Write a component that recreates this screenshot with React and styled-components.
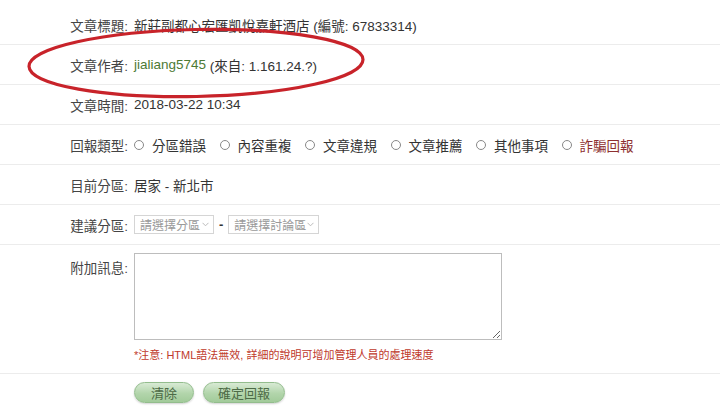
import React from "react";
import styled, { createGlobalStyle } from "styled-components";

const Global = createGlobalStyle`
  html, body { margin: 0; padding: 0; background: #fff; }
  body { font-family: "Liberation Sans", Arial, "Noto Sans CJK TC", sans-serif; color: #333; }
`;

const Page = styled.div`
  position: relative;
  width: 720px;
  height: 413px;
  padding-top: 5px;
  box-sizing: border-box;
  overflow: hidden;
`;

const Row = styled.div`
  display: flex;
  align-items: ${(p) => (p.$top ? "flex-start" : "center")};
  min-height: ${(p) => p.$h || 39}px;
  border-bottom: ${(p) => (p.$last ? "none" : "1px solid #ececec")};
  font-size: 13.5px;
  box-sizing: content-box;
`;

const Label = styled.div`
  width: 128px;
  text-align: right;
  color: #444;
  padding-top: ${(p) => p.$pt || 0}px;
  flex: none;
`;

const Value = styled.div`
  margin-left: 6px;
  color: #333;
  display: flex;
  padding-top: ${(p) => p.$pt || 0}px;
  flex-direction: ${(p) => (p.$col ? "column" : "row")};
  align-items: ${(p) => (p.$col ? "flex-start" : "center")};
`;

const Author = styled.span`
  color: #4c7a34;
`;

const Options = styled.div`
  display: flex;
  gap: 13.5px;
  margin-left: 0;
`;

const Option = styled.label`
  display: flex;
  align-items: center;
  gap: 8px;
  color: ${(p) => (p.$alert ? "#8e3030" : "#333")};
`;

const Radio = styled.span`
  width: 8px;
  height: 8px;
  border: 1px solid #888;
  border-radius: 50%;
  box-sizing: content-box;
`;

const Select = styled.div`
  display: flex;
  align-items: center;
  justify-content: space-between;
  width: ${(p) => p.$w}px;
  height: 19px;
  box-sizing: border-box;
  border: 1px solid #d5d5d5;
  padding: 0 4px 0 5px;
  font-size: 12px;
  color: #9a9a9a;
`;

const Dash = styled.span`
  margin: 0 5px;
  font-size: 13px;
  color: #333;
  font-weight: bold;
`;

const TextArea = styled.textarea`
  width: 368px;
  height: 87px;
  box-sizing: border-box;
  border: 1px solid #bdbdbd;
  margin: 0;
  resize: both;
  font-family: inherit;
`;

const Note = styled.div`
  font-size: 11px;
  color: #c0392b;
  margin-top: 6px;
`;

const Buttons = styled.div`
  display: flex;
  gap: 9px;
  margin-left: 134px;
  padding-top: 8px;
`;

const Button = styled.button`
  width: ${(p) => p.$w}px;
  height: 21px;
  border-radius: 11px;
  border: 1px solid #93bd8d;
  background: linear-gradient(#d8ead4, #b2d5ab 55%, #a2cb9a);
  box-shadow: 0 1px 2px rgba(0, 0, 0, 0.18);
  color: #4d6a46;
  font-size: 13px;
  font-family: "Liberation Sans", "Noto Sans CJK TC", sans-serif;
  padding: 0;
`;

const Mark = styled.svg`
  position: absolute;
  left: 0;
  top: 0;
  pointer-events: none;
`;

const Chevron = () => (
  <svg width="7" height="5" viewBox="0 0 7 5">
    <path d="M0.5 0.8 L3.5 3.8 L6.5 0.8" fill="none" stroke="#bbb" strokeWidth="1" />
  </svg>
);

const types = ["分區錯誤", "內容重複", "文章違規", "文章推薦", "其他事項"];

export default function App() {
  return (
    <Page>
      <Global />
      <Row>
        <Label>文章標題:</Label>
        <Value>新莊副都心宏匯凱悅嘉軒酒店 (編號: 67833314)</Value>
      </Row>
      <Row>
        <Label>文章作者:</Label>
        <Value>
          <Author>jialiang5745</Author>&nbsp;(來自: 1.161.24.?)
        </Value>
      </Row>
      <Row>
        <Label>文章時間:</Label>
        <Value>2018-03-22 10:34</Value>
      </Row>
      <Row>
        <Label>回報類型:</Label>
        <Value>
          <Options>
            {types.map((t) => (
              <Option key={t}>
                <Radio />
                {t}
              </Option>
            ))}
            <Option $alert>
              <Radio />
              詐騙回報
            </Option>
          </Options>
        </Value>
      </Row>
      <Row>
        <Label>目前分區:</Label>
        <Value>居家 - 新北市</Value>
      </Row>
      <Row>
        <Label>建議分區:</Label>
        <Value>
          <Select $w={80}>
            請選擇分區
            <Chevron />
          </Select>
          <Dash>-</Dash>
          <Select $w={91}>
            請選擇討論區
            <Chevron />
          </Select>
        </Value>
      </Row>
      <Row $top $h={128}>
        <Label $pt={12}>附加訊息:</Label>
        <Value $col $pt={8}>
          <TextArea />
          <Note>*注意: HTML語法無效, 詳細的說明可增加管理人員的處理速度</Note>
        </Value>
      </Row>
      <Buttons>
        <Button $w={60}>清除</Button>
        <Button $w={82}>確定回報</Button>
      </Buttons>
      <Mark width="720" height="413">
        <ellipse
          cx="196"
          cy="63"
          rx="167"
          ry="33.5"
          transform="rotate(-1.2 196 63)"
          fill="none"
          stroke="#c8232a"
          strokeWidth="3.2"
        />
      </Mark>
    </Page>
  );
}
